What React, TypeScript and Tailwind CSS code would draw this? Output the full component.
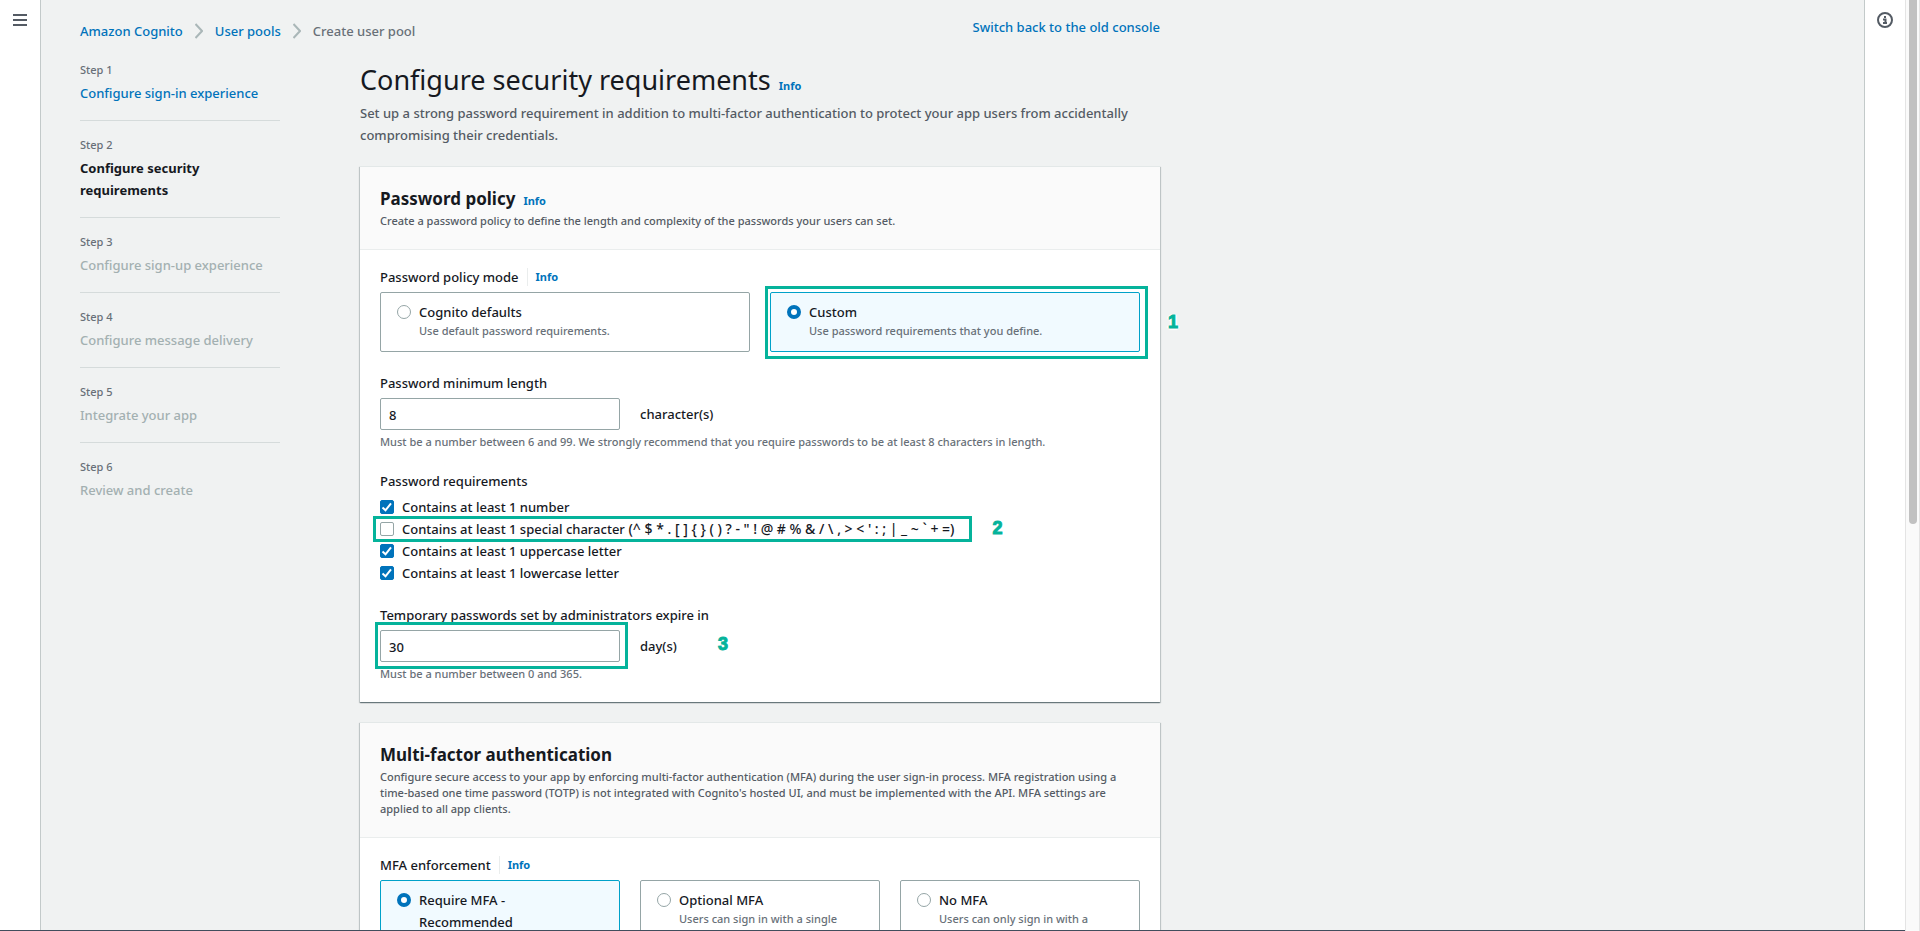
import type { ReactNode } from "react";

type Step = { label: string; title: string; state: "done" | "current" | "pending" };

const steps: Step[] = [
  { label: "Step 1", title: "Configure sign-in experience", state: "done" },
  { label: "Step 2", title: "Configure security requirements", state: "current" },
  { label: "Step 3", title: "Configure sign-up experience", state: "pending" },
  { label: "Step 4", title: "Configure message delivery", state: "pending" },
  { label: "Step 5", title: "Integrate your app", state: "pending" },
  { label: "Step 6", title: "Review and create", state: "pending" },
];

function InfoLink() {
  return (
    <a href="#info" className="text-[11px] leading-4 font-bold text-[#0073bb]">
      Info
    </a>
  );
}

function BreadcrumbChevron() {
  return (
    <svg className="mx-3 h-4 w-2 shrink-0" viewBox="0 0 8 16" fill="none" stroke="#aab7b8" strokeWidth="2" aria-hidden="true">
      <path d="M0.5 1 7 8 0.5 15" />
    </svg>
  );
}

function Callout({ box, number, children }: { box: string; number: string; children: ReactNode }) {
  return (
    <>
      <span className={`pointer-events-none absolute border-3 border-[#05b39b] ${box}`} />
      <span
        className={`pointer-events-none absolute font-['Liberation_Sans',sans-serif] text-lg leading-5 font-bold text-[#05b39b] [-webkit-text-stroke:1px_#05b39b] [text-shadow:1px_1px_1px_#fff,-1px_-1px_1px_#fff,1px_-1px_1px_#fff,-1px_1px_1px_#fff,2px_0_1px_#fff,-2px_0_1px_#fff,0_2px_1px_#fff] ${number}`}
      >
        {children}
      </span>
    </>
  );
}

function StepItem({ step, last }: { step: Step; last: boolean }) {
  return (
    <li className={last ? "" : "mb-4 border-b border-[#d5dbdb] pb-4"}>
      <p className="mb-1 text-[11px] leading-4 text-[#687078]">{step.label}</p>
      {step.state === "done" && (
        <a href="#step-1" className="block leading-[22px] text-[#0073bb]">
          {step.title}
        </a>
      )}
      {step.state === "current" && <p className="pr-8 leading-[22px] font-bold text-[#16191f]">{step.title}</p>}
      {step.state === "pending" && <p className="leading-[22px] text-[#a3b0b1]">{step.title}</p>}
    </li>
  );
}

function Panel({ title, info, description, children }: { title: string; info?: boolean; description: string; children: ReactNode }) {
  return (
    <section className="mb-5 border-t border-[#e3e8e8] bg-white shadow-[0_1px_1px_0_rgba(0,28,36,0.4),1px_1px_1px_0_rgba(0,28,36,0.15),-1px_1px_1px_0_rgba(0,28,36,0.15)]">
      <header className="border-b border-[#eaeded] bg-[#fafafa] p-5">
        <div className="mb-0.5 flex items-baseline gap-2">
          <h2 className="text-[17px] leading-6 font-bold text-[#16191f]">{title}</h2>
          {info && <InfoLink />}
        </div>
        <p className="text-[11px] leading-4 text-[#545b64]">{description}</p>
      </header>
      <div className="flex flex-col gap-5 px-5 pt-4 pb-5">{children}</div>
    </section>
  );
}

function GroupLabel({ children }: { children: ReactNode }) {
  return (
    <div className="mb-1 flex h-[22px] items-center">
      <span className="mr-2 border-r border-[#eaeded] pr-2 leading-[18px]">{children}</span>
      <InfoLink />
    </div>
  );
}

function Tile({ name, title, description, checked, children }: { name: string; title: ReactNode; description?: string; checked?: boolean; children?: ReactNode }) {
  return (
    <div className="relative flex">
      <label
        className={`flex flex-1 items-start gap-2 rounded-xs border px-4 pt-2 pb-3 ${checked ? "border-[#00a1c9] bg-[#f1faff]" : "border-[#95a5a6] bg-white"}`}
      >
        <input
          type="radio"
          name={name}
          defaultChecked={checked}
          className="mt-1 size-3.5 shrink-0 appearance-none rounded-full border border-[#95a5a6] bg-white checked:border-4 checked:border-[#0073bb]"
        />
        <span>
          <span className="block leading-[22px]">{title}</span>
          {description && <span className="block text-[11px] leading-4 text-[#687078]">{description}</span>}
        </span>
      </label>
      {children}
    </div>
  );
}

function CheckRow({ label, symbols, checked, children }: { label: string; symbols?: string; checked?: boolean; children?: ReactNode }) {
  return (
    <div className="relative w-fit">
      <label className="flex items-center gap-2 leading-[22px]">
        <span className="grid size-3.5 shrink-0">
          <input
            type="checkbox"
            defaultChecked={checked}
            className="peer col-start-1 row-start-1 size-3.5 appearance-none rounded-xs border border-[#95a5a6] bg-white checked:border-[#0073bb] checked:bg-[#0073bb]"
          />
          <svg
            viewBox="0 0 14 14"
            className="pointer-events-none invisible col-start-1 row-start-1 size-3.5 peer-checked:visible"
            fill="none"
            stroke="#fff"
            strokeWidth="2"
            aria-hidden="true"
          >
            <path d="M2.5 7.5 5.5 10.3 11 3.3" />
          </svg>
        </span>
        <span>
          {label}
          {symbols && <span className="text-sm leading-[22px]"> {symbols}</span>}
        </span>
      </label>
      {children}
    </div>
  );
}

function NumberField({ id, label, value, unit, hint, children }: { id: string; label: string; value: string; unit: string; hint: string; children?: ReactNode }) {
  return (
    <div>
      <label htmlFor={id} className="mb-1 block leading-[22px]">
        {label}
      </label>
      <div className="relative flex items-center gap-5">
        <input
          id={id}
          type="text"
          inputMode="numeric"
          defaultValue={value}
          className="h-8 w-60 rounded-xs border border-[#95a5a6] bg-white px-2 pt-0.5 text-[13px] text-[#16191f]"
        />
        <span className="leading-[22px]">{unit}</span>
        {children}
      </div>
      <p className="mt-1 text-[11px] leading-4 text-[#687078]">{hint}</p>
    </div>
  );
}

export default function App() {
  return (
    <div className="flex h-screen overflow-hidden bg-[#f0f2f2] font-['Noto_Sans','Open_Sans',sans-serif] text-[13px] font-medium text-[#16191f]">
      <div className="flex min-w-0 flex-1 overflow-hidden border-b border-[#414d5c]">
        <nav className="w-[41px] shrink-0 border-r border-[#c3caca] bg-white pt-[13px] pl-[13px]">
          <button type="button" aria-label="Open navigation" className="block">
            <svg className="h-3.5 w-3.5" viewBox="0 0 14 14" fill="none" stroke="#545b64" strokeWidth="2" aria-hidden="true">
              <path d="M0 2h14M0 7h14M0 12h14" />
            </svg>
          </button>
        </nav>

        <div className="min-w-0 flex-1 pl-[39px]">
          <div className="flex w-[1080px] items-start justify-between pt-4">
            <ol className="flex items-center pt-1 leading-[22px]">
              <li>
                <a href="#cognito" className="text-[#0073bb]">Amazon Cognito</a>
              </li>
              <BreadcrumbChevron />
              <li>
                <a href="#pools" className="text-[#0073bb]">User pools</a>
              </li>
              <BreadcrumbChevron />
              <li className="text-[#687078]">Create user pool</li>
            </ol>
            <a href="#old" className="leading-[22px] text-[#0073bb]">Switch back to the old console</a>
          </div>

          <div className="flex gap-20 pt-5">
            <ol className="w-[200px] shrink-0">
              {steps.map((s, i) => (
                <StepItem key={s.label} step={s} last={i === steps.length - 1} />
              ))}
            </ol>

            <main className="w-[800px]">
              <div className="mb-1 flex items-baseline gap-2">
                <h1 className="text-[27px] leading-9 font-normal">Configure security requirements</h1>
                <InfoLink />
              </div>
              <p className="mb-5 leading-[22px] text-[#545b64]">
                Set up a strong password requirement in addition to multi-factor authentication to protect your app users from accidentally compromising their credentials.
              </p>

              <Panel title="Password policy" info description="Create a password policy to define the length and complexity of the passwords your users can set.">
                <div>
                  <GroupLabel>Password policy mode</GroupLabel>
                  <div className="grid grid-cols-2 gap-5">
                    <Tile name="policy" title="Cognito defaults" description="Use default password requirements." />
                    <Tile name="policy" title="Custom" description="Use password requirements that you define." checked>
                      <Callout box="-top-1.5 -right-2 -bottom-[7px] -left-[5px]" number="top-5 left-full ml-7">1</Callout>
                    </Tile>
                  </div>
                </div>

                <NumberField
                  id="min-length"
                  label="Password minimum length"
                  value="8"
                  unit="character(s)"
                  hint="Must be a number between 6 and 99. We strongly recommend that you require passwords to be at least 8 characters in length."
                />

                <fieldset>
                  <legend className="mb-1 leading-[22px]">Password requirements</legend>
                  <CheckRow label="Contains at least 1 number" checked />
                  <CheckRow
                    label="Contains at least 1 special character"
                    symbols={"(^ $ * . [ ] { } ( ) ? - \" ! @ # % & / \\ , > < ' : ; | _ ~ ` + =)"}
                  >
                    <Callout box="-top-0.5 -right-[18px] -bottom-0.5 -left-[7px]" number="top-0 left-full ml-[38px]">2</Callout>
                  </CheckRow>
                  <CheckRow label="Contains at least 1 uppercase letter" checked />
                  <CheckRow label="Contains at least 1 lowercase letter" checked />
                </fieldset>

                <NumberField
                  id="expiry"
                  label="Temporary passwords set by administrators expire in"
                  value="30"
                  unit="day(s)"
                  hint="Must be a number between 0 and 365."
                >
                  <Callout box="-top-2 -bottom-[7px] -left-[5px] w-[253px]" number="top-1 left-[338px]">3</Callout>
                </NumberField>
              </Panel>

              <Panel
                title="Multi-factor authentication"
                description="Configure secure access to your app by enforcing multi-factor authentication (MFA) during the user sign-in process. MFA registration using a time-based one time password (TOTP) is not integrated with Cognito's hosted UI, and must be implemented with the API. MFA settings are applied to all app clients."
              >
                <div>
                  <GroupLabel>MFA enforcement</GroupLabel>
                  <div className="grid grid-cols-3 gap-5">
                    <Tile
                      name="mfa"
                      title={
                        <>
                          Require MFA -<br />
                          Recommended
                        </>
                      }
                      checked
                    />
                    <Tile name="mfa" title="Optional MFA" description="Users can sign in with a single" />
                    <Tile name="mfa" title="No MFA" description="Users can only sign in with a" />
                  </div>
                </div>
              </Panel>
            </main>
          </div>
        </div>

        <aside className="w-[41px] shrink-0 border-l border-[#c3caca] bg-white pt-3 pl-3">
          <button type="button" aria-label="Open help panel" className="block">
            <svg className="h-4 w-4" viewBox="0 0 16 16" fill="none" stroke="#545b64" strokeWidth="2" aria-hidden="true">
              <circle cx="8" cy="8" r="7" />
              <path d="M7 5h2M6 7.5h2.5V11M6 11h4" />
            </svg>
          </button>
        </aside>
      </div>

      <div className="w-[15px] shrink-0 border-x border-[#e4e4e4] bg-[#fafafa] pl-[3px]">
        <div className="h-[56.3%] w-2 rounded-b-full bg-[#c1c1c1]" />
      </div>
    </div>
  );
}
